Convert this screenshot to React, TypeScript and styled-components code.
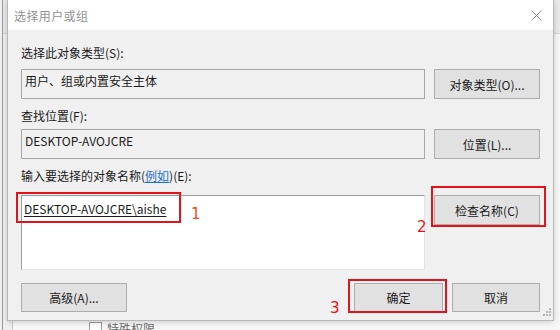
import styled, { createGlobalStyle } from 'styled-components';

const GlobalStyle = createGlobalStyle`
  html, body {
    margin: 0;
    padding: 0;
    background: #f0f0f0;
  }
  body {
    font-family: "Noto Sans CJK SC", "Noto Sans", sans-serif;
    font-size: 12px;
    color: #1a1a1a;
  }
`;

const Desktop = styled.div`
  position: relative;
  width: 560px;
  height: 330px;
  overflow: hidden;
  background: #f0f0f0;
`;

// 뒤쪽에 깔린 권한 창 (일부만 보임)
const BackWindow = styled.div`
  position: absolute;
  left: 2px;
  top: 0;
  right: 0;
  bottom: 0;
  border-left: 1px solid #9a9a9a;
  background: #f0f0f0;
  display: flex;
  flex-direction: column;
`;

const BackTop = styled.div`
  height: 33px;
  border-bottom: 1px solid #d4d4d4;
  background: #e9e9e9;
`;

const BackPanel = styled.div`
  flex: 1;
  margin-left: 9px;
  border-left: 1px solid #c8c8c8;
  background: #f7f7f7;
  display: flex;
  align-items: flex-end;
`;

const BackRow = styled.div`
  display: flex;
  align-items: center;
  gap: 5px;
  padding: 0 0 0 76px;
  height: 16px;
  margin-bottom: -6px;
  color: #6a6a6a;
`;

const CheckBox = styled.span`
  width: 11px;
  height: 11px;
  border: 1px solid #9a9a9a;
  background: #fff;
`;

const Dialog = styled.div`
  position: absolute;
  left: 7px;
  top: 0;
  width: 547px;
  height: 321px;
  box-sizing: border-box;
  border: 1px solid #b8b8b8;
  border-top: none;
  background: #f0f0f0;
  box-shadow: 0 1px 6px rgba(0, 0, 0, 0.18);
  display: flex;
  flex-direction: column;
`;

const TitleBar = styled.div`
  height: 30px;
  background: #fff;
  display: flex;
  align-items: center;
  justify-content: space-between;
  padding: 0 11px 0 6px;
`;

const Title = styled.span`
  color: #929292;
  font-size: 12px;
  letter-spacing: 0.4px;
`;

const Body = styled.div`
  flex: 1;
  display: flex;
  flex-direction: column;
  padding: 0 13px;
  position: relative;
`;

const Label = styled.div<{ $top: number }>`
  margin-top: ${(p) => p.$top}px;
  height: 18px;
  line-height: 18px;
  white-space: nowrap;
`;

const Link = styled.span`
  color: #1a6fd0;
  text-decoration: underline;
`;

const FieldRow = styled.div<{ $top: number }>`
  margin-top: ${(p) => p.$top}px;
  display: flex;
  align-items: flex-start;
  gap: 9px;
`;

const ReadBox = styled.div`
  flex: 1;
  height: 30px;
  box-sizing: border-box;
  border: 1px solid #a8a8a8;
  background: #f0f0f0;
  padding: 2px 3px;
  line-height: 18px;
`;

const NameArea = styled.div`
  flex: 1;
  height: 75px;
  box-sizing: border-box;
  border: 1px solid;
  border-color: #9c9c9c #e3e3e3 #e3e3e3 #9c9c9c;
  background: #fff;
  padding: 4px 2px;
  line-height: 18px;
`;

const Resolved = styled.span`
  text-decoration: underline;
  text-underline-offset: 2px;
  color: #1a1a1a;
`;

const Button = styled.button<{ $w: number }>`
  width: ${(p) => p.$w}px;
  height: 30px;
  box-sizing: border-box;
  margin: 0;
  padding: 0;
  border: 1px solid #adadad;
  background: #e1e1e1;
  font-family: inherit;
  font-size: 12px;
  color: #1a1a1a;
  white-space: nowrap;
`;

const Footer = styled.div`
  margin-top: 13px;
  display: flex;
  align-items: center;
  gap: 9px;

  & > :first-child {
    margin-right: auto;
  }

  & > button {
    height: 29px;
  }
`;

const Grip = styled.svg`
  position: absolute;
  right: 1px;
  bottom: 1px;
`;

// 빨간 주석 박스와 번호
const Mark = styled.div<{ $x: number; $y: number; $w: number; $h: number }>`
  position: absolute;
  left: ${(p) => p.$x}px;
  top: ${(p) => p.$y}px;
  width: ${(p) => p.$w}px;
  height: ${(p) => p.$h}px;
  box-sizing: border-box;
  border: 2px solid #e3131c;
`;

const Num = styled.span<{ $x: number; $y: number; $color?: string }>`
  position: absolute;
  left: ${(p) => p.$x}px;
  top: ${(p) => p.$y}px;
  font-family: "DejaVu Sans", sans-serif;
  font-size: 15px;
  line-height: 15px;
  color: ${(p) => p.$color || '#e3131c'};
`;

const CloseIcon = () => (
  <svg width="11" height="11" viewBox="0 0 11 11">
    <path d="M0.5 0.5 L10.5 10.5 M10.5 0.5 L0.5 10.5" stroke="#8a8a8a" strokeWidth="1" fill="none" />
  </svg>
);

const App = () => {
  const dots = [
    [8, 0],
    [5, 3],
    [8, 3],
    [2, 6],
    [5, 6],
    [8, 6],
  ];

  return (
    <>
      <GlobalStyle />
      <Desktop>
        <BackWindow>
          <BackTop />
          <BackPanel>
            <BackRow>
              <CheckBox />
              <span>特殊权限</span>
            </BackRow>
          </BackPanel>
        </BackWindow>

        <Dialog>
          <TitleBar>
            <Title>选择用户或组</Title>
            <CloseIcon />
          </TitleBar>
          <Body>
            <Label $top={14}>选择此对象类型(S):</Label>
            <FieldRow $top={7}>
              <ReadBox>用户、组或内置安全主体</ReadBox>
              <Button $w={106}>对象类型(O)...</Button>
            </FieldRow>

            <Label $top={8}>查找位置(F):</Label>
            <FieldRow $top={4}>
              <ReadBox>DESKTOP-AVOJCRE</ReadBox>
              <Button $w={106}>位置(L)...</Button>
            </FieldRow>

            <Label $top={8}>
              输入要选择的对象名称(<Link>例如</Link>)(E):
            </Label>
            <FieldRow $top={10}>
              <NameArea>
                <Resolved>DESKTOP-AVOJCRE\aishe</Resolved>
              </NameArea>
              <Button $w={106}>检查名称(C)</Button>
            </FieldRow>

            <Footer>
              <Button $w={106}>高级(A)...</Button>
              <Button $w={89}>确定</Button>
              <Button $w={88}>取消</Button>
            </Footer>

            <Grip width="11" height="11" viewBox="0 0 11 11">
              {dots.map(([x, y]) => (
                <rect key={`${x}-${y}`} x={x} y={y} width="2" height="2" fill="#b5b5b5" />
              ))}
            </Grip>
          </Body>
        </Dialog>

        <Mark $x={16} $y={192} $w={165} $h={31} />
        <Num $x={191} $y={207} $color="#ef4a26">1</Num>
        <Mark $x={431} $y={186} $w={115} $h={41} />
        <Num $x={417} $y={220}>2</Num>
        <Mark $x={348} $y={279} $w={99} $h={34} />
        <Num $x={330} $y={301}>3</Num>
      </Desktop>
    </>
  );
};

export default App;
